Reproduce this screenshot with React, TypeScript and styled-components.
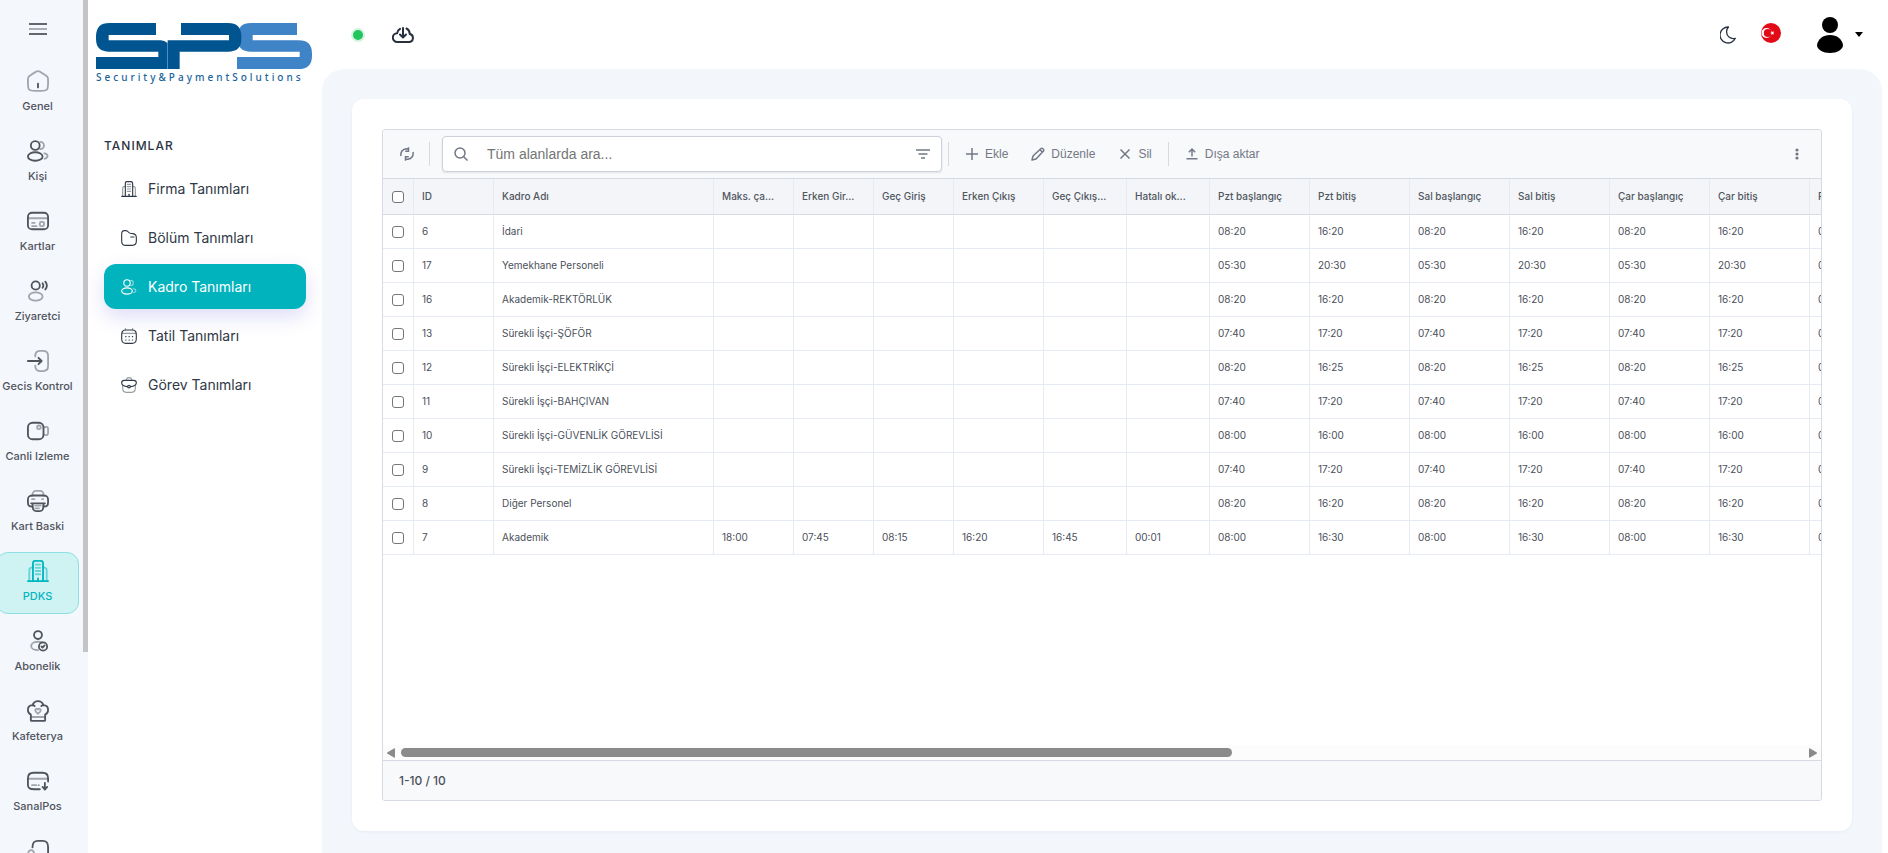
import React from 'react';
import styled, { createGlobalStyle, css } from 'styled-components';

const GlobalStyle = createGlobalStyle`
  *, *::before, *::after { box-sizing: border-box; }
  body {
    margin: 0;
    background: #ffffff;
    color: #2b3442;
    font-family: Inter, "Noto Sans", sans-serif;
    overflow: hidden;
  }
  button { font: inherit; color: inherit; background: none; border: 0; padding: 0; cursor: pointer; }
  a { color: inherit; text-decoration: none; }
  svg { display: block; flex: none; }
`;

/* ---------- icons ---------- */

type IconName =
  | 'home' | 'users' | 'cards' | 'visitor' | 'gate' | 'camera' | 'printer' | 'building'
  | 'member' | 'chef' | 'pos' | 'device' | 'folder' | 'calendar' | 'briefcase';

const faded = 0.5;

const shapes: Record<IconName, React.ReactNode> = {
  home: (
    <>
      <path opacity={faded} d="M1 12.2c0-2.3 0-3.5.5-4.4.5-1 1.500-1.600 3.400-2.800l2-1.300C9.400 2 10.600 1.200 12 1.200s2.600.8 5.100 2.500l2 1.300c1.900 1.200 2.900 1.800 3.400 2.800.5.900.5 2.100.5 4.400v1.600c0 4 0 6-1.400 7.500C20.400 22.800 18.400 22.800 15 22.800H9c-3.400 0-5.400 0-6.600-1.500C1 19.800 1 17.800 1 13.800z" />
      <path d="M12 15v4" />
    </>
  ),
  users: (
    <>
      <circle cx="9" cy="6" r="4.800" />
      <ellipse cx="9" cy="18" rx="8" ry="4.600" />
      <g opacity={faded}>
        <path d="M14.500 2a4 4 0 1 1 0 8" />
        <path d="M19 14.500c2 .4 3.400 1.500 3.400 3s-1.300 2.500-3.200 3" />
      </g>
    </>
  ),
  cards: (
    <>
      <rect x="1" y="3" width="22" height="18" rx="4.500" />
      <g opacity={faded}>
        <path d="M1.500 9h21M5.500 14h3M5.500 17.500h5" />
        <rect x="14" y="13" width="4.500" height="4.500" rx="1.500" />
      </g>
    </>
  ),
  visitor: (
    <>
      <circle cx="9.500" cy="6" r="4.500" />
      <ellipse opacity={faded} cx="9.500" cy="18" rx="7.500" ry="4.500" />
      <path d="M17 3.500c1 1.500 1 3.500 0 5M20 1.800c2 2.500 2 6 0 8.500" />
    </>
  ),
  gate: (
    <>
      <path opacity={faded} d="M9 7c0-4 1-6 5-6h3.500C21.500 1 23 2.500 23 6.500v11c0 4-1.500 5.500-5.500 5.500H14c-4 0-5-2-5-6" />
      <path d="M1 12h15M12.500 8.500 16 12l-3.500 3.500" />
    </>
  ),
  camera: (
    <>
      <rect x="1" y="3" width="17" height="18" rx="5" />
      <circle opacity={faded} cx="13" cy="8" r="2" />
      <path opacity={faded} d="M18 8.500c3.500-2 5-1 5 1.500v4c0 2.500-1.500 3.500-5 1.500" />
    </>
  ),
  printer: (
    <>
      <path d="M6 18c-4 0-5-1-5-5v-2c0-4 1.500-5 5.500-5h11C21.500 6 23 7 23 11v2c0 4-1 5-5 5" />
      <path opacity={faded} d="M6 6c0-3.500.5-5 4-5h4c3.500 0 4 1.500 4 5M5.500 10h2.500M16.500 10h1" />
      <path d="M4.500 14.500h15M6 14.500c0 6 .5 8.500 4 8.500h4c3.500 0 4-2.500 4-8.500" />
      <path opacity={faded} d="M9 17h6M9 20h4" />
    </>
  ),
  building: (
    <>
      <path d="M1 23h22" />
      <path d="M6.500 23V5c0-2.800 0-4 2.500-4h6c2.500 0 2.500 1.200 2.500 4v18" />
      <path opacity={faded} d="M2.500 23V11c0-2 1-3 4-3M21.500 23V11c0-2-1-3-4-3M9.500 5h5M9.500 8.500h5M9.500 12h5M9.500 15.500h5" />
      <path d="M12 23v-3" />
    </>
  ),
  member: (
    <>
      <circle cx="12" cy="5.500" r="4.300" />
      <path opacity={faded} d="M17 13.800c-1.300-.6-3-1-5-1-4.300 0-7.500 2-7.500 4.700S7.700 22 12 22" />
      <circle cx="17.500" cy="18" r="4.500" />
      <path d="m15.800 18 1.200 1.200 2.200-2.400" />
    </>
  ),
  chef: (
    <>
      <path d="M5 22.800h14c.5 0 .8-.3.800-.8v-6c2-1 3.200-3 3.200-5.200 0-3-2-5-5-5.200C17 3 15 1.200 12 1.200S7 3 6 5.600c-3 .2-5 2.200-5 5.200 0 2.200 1.200 4.200 3.200 5.200v6c0 .5.3.8.8.8zM6 5.600c1 .1 1.700.5 2.300 1M18 5.600c-1 .1-1.700.5-2.300 1" />
      <g opacity={faded}>
        <path d="M4.500 18.500h15" />
        <path d="M12 15c-2-1.300-3-2.300-3-3.700 0-2 2-2.300 3-.9 1-1.400 3-1.100 3 .9 0 1.400-1 2.400-3 3.700z" />
      </g>
    </>
  ),
  pos: (
    <>
      <path d="M14 21H8c-5 0-7-1-7-5V9c0-4 2-6 6-6h10c4 0 6 2 6 6v3.500" />
      <path opacity={faded} d="M1.500 9.500h21M5.500 16.500H10M12.500 16.500h.5" />
      <path d="M19.500 14v7M17 18.500l2.500 2.800 2.500-2.800" />
    </>
  ),
  device: (
    <>
      <path d="M6 8c0-5 1.500-7 6-7h5c4.500 0 6 2 6 7v8c0 5-1.500 7-6 7" />
      <path opacity={faded} d="M8 17c0-4-.5-6-3.500-6S1 13 1 17s.5 6 3.500 6S8 21 8 17z" />
    </>
  ),
  folder: (
    <>
      <path d="M1 7c0-4 1-6 4-6h2c2 0 3 .7 4 2 .9 1.200 1.500 1.500 3 1.800l4 .7c4 .7 5 2 5 6V17c0 4-2 6-6 6H7c-4 0-6-2-6-6z" />
      <path d="M14.500 10.500h5" />
    </>
  ),
  calendar: (
    <>
      <path d="M1 12c0-5.500.5-9 6-9h10c5.500 0 6 3.500 6 9v2c0 6-.5 9-6 9H7c-5.500 0-6-3-6-9z" />
      <path opacity={faded} d="M6.500 3V.8M17.500 3V.8M2 8h20" />
      <path strokeDasharray="0.500 4.500" d="M7 13h11M7 18h11" />
    </>
  ),
  briefcase: (
    <>
      <path opacity={faded} d="M8 4c.4-2 1.500-3 4-3s3.600 1 4 3M2.500 13v4c0 4 1.500 6 5.500 6h8c4 0 5.500-2 5.500-6v-4" />
      <path d="M10 14.500C5 14 1 12.500 1 8.500 1 6 2 5 5 5h14c3 0 4 1 4 3.500 0 4-4 5.500-9 6" />
      <circle cx="12" cy="14.300" r="2" />
    </>
  ),
};

function DuoIcon({ name, size, weight = 2 }: { name: IconName; size: number; weight?: number }) {
  return (
    <svg width={size} height={size} viewBox="0 0 24 24" fill="none" stroke="currentColor"
      strokeWidth={weight} strokeLinecap="round" strokeLinejoin="round" aria-hidden="true">
      {shapes[name]}
    </svg>
  );
}

function LineIcon({ size = 14, children }: { size?: number; children: React.ReactNode }) {
  return (
    <svg width={size} height={size} viewBox="0 0 14 14" fill="none" stroke="currentColor" strokeWidth="1.500" aria-hidden="true">
      {children}
    </svg>
  );
}

/* ---------- shell ---------- */

const Shell = styled.div`
  display: flex;
  height: 100vh;
`;

const Rail = styled.nav`
  display: flex;
  justify-content: space-between;
  flex: none;
  width: 88px;
  overflow: hidden;
  background: #f4f7fc;
`;

const RailColumn = styled.div`
  display: flex;
  flex-direction: column;
  align-items: center;
  gap: 8px;
  width: 83px;
  margin-left: -4px;
`;

const RailThumb = styled.div`
  width: 5px;
  height: 76.4%;
  background: #c4c4c8;
`;

const MenuToggle = styled.button`
  display: flex;
  flex: none;
  align-items: center;
  justify-content: center;
  width: 40px;
  height: 54px;
  padding-top: 4px;
  color: #63666d;
`;

const RailLink = styled.a<{ $active?: boolean }>`
  display: flex;
  flex: none;
  flex-direction: column;
  align-items: center;
  gap: 6px;
  width: 100%;
  height: 62px;
  padding-top: 7px;
  border: 1px solid transparent;
  border-radius: 12px;
  color: #50545c;
  font-size: 11px;
  font-weight: 500;
  line-height: 16px;
  white-space: nowrap;
  ${({ $active }) => $active && css`
    color: #00b5bf;
    background: #cff2f3;
    border-color: #8fe0e4;
  `}
`;

const Side = styled.aside`
  display: flex;
  flex-direction: column;
  flex: none;
  width: 234px;
  padding: 23px 16px 0;
`;

const Brand = styled.a`
  display: flex;
  flex-direction: column;
  gap: 2px;
  margin: 0 -8px;
  color: #1a639c;
  font-family: "Noto Sans", sans-serif;
  font-size: 10px;
  font-weight: 500;
  line-height: 12px;
  letter-spacing: 3px;
  white-space: nowrap;
`;

const SideTitle = styled.h2`
  margin: 55px 0 12px;
  color: #2b3442;
  font-size: 12px;
  font-weight: 500;
  line-height: 16px;
  letter-spacing: 1px;
`;

const SideLink = styled.a<{ $active?: boolean }>`
  display: flex;
  align-items: center;
  gap: 11px;
  height: 45px;
  margin-bottom: 4px;
  padding: 0 17px;
  border-radius: 12px;
  color: #2f3846;
  font-size: 14px;
  line-height: 20px;
  ${({ $active }) => $active && css`
    color: #ffffff;
    background: #00b3bd;
    box-shadow: 0 8px 20px rgba(90, 90, 220, 0.2);
  `}
`;

const Page = styled.div`
  display: flex;
  flex: 1;
  flex-direction: column;
  min-width: 0;
  padding-right: 6px;
`;

const TopBar = styled.header`
  display: flex;
  align-items: center;
  flex: none;
  height: 69px;
  padding: 0 19px 0 29px;
  color: #27303f;
`;

const OnlineDot = styled.span`
  width: 14px;
  height: 14px;
  margin-right: 27px;
  border: 2px solid #d5f3df;
  border-radius: 50%;
  background: #22c55e;
`;

const TopActions = styled.div`
  display: flex;
  align-items: center;
  margin-left: auto;
`;

const TopButton = styled.button<{ $gap?: number }>`
  display: flex;
  align-items: center;
  gap: 12px;
  margin-left: ${({ $gap = 0 }) => $gap}px;
`;

const Content = styled.main`
  display: flex;
  flex: 1;
  min-height: 0;
  padding: 30px 30px 22px;
  border-radius: 22px 22px 0 0;
  background: #f3f7fc;
`;

const Card = styled.section`
  display: flex;
  flex: 1;
  min-width: 0;
  padding: 30px;
  border-radius: 12px;
  background: #ffffff;
  box-shadow: 0 1px 3px rgba(40, 60, 110, 0.06);
`;

/* ---------- grid ---------- */

const Grid = styled.div`
  display: flex;
  flex: 1;
  flex-direction: column;
  min-width: 0;
  overflow: hidden;
  border: 1px solid #d5dae3;
  border-radius: 3px;
`;

const Toolbar = styled.div`
  display: flex;
  align-items: center;
  flex: none;
  height: 49px;
  padding: 0 19px 0 17px;
  border-bottom: 1px solid #d5dae3;
  background: #f8f9fb;
  color: #737886;
  font-family: "Liberation Sans", Arial, sans-serif;
  font-size: 12px;
  line-height: 16px;
`;

const Divider = styled.span`
  flex: none;
  width: 1px;
  height: 24px;
  background: #d5dae3;
`;

const ToolButton = styled.button`
  display: flex;
  align-items: center;
  gap: 6px;
  white-space: nowrap;
`;

const RefreshButton = styled(ToolButton)`
  margin-right: 15px;
`;

const ToolGroup = styled.div`
  display: flex;
  gap: 23px;
  padding: 0 16px;
`;

const SearchBox = styled.div`
  display: flex;
  align-items: center;
  width: 500px;
  height: 36px;
  margin: 0 6px 0 12px;
  padding: 0 11px;
  border: 1px solid #cbd0da;
  border-radius: 4px;
  background: #ffffff;
  box-shadow: 0 1px 2px rgba(60, 70, 100, 0.12);
`;

const SearchInput = styled.input`
  flex: 1;
  min-width: 0;
  padding: 0 0 0 19px;
  border: 0;
  outline: 0;
  background: none;
  font-family: "Liberation Sans", Arial, sans-serif;
  font-size: 14px;
  line-height: 20px;
  &::placeholder { color: #757575; opacity: 1; }
`;

const MoreButton = styled(ToolButton)`
  margin-left: auto;
`;

const TableArea = styled.div`
  flex: 1;
  min-height: 0;
  overflow: hidden;
`;

const Table = styled.table`
  width: 1527px;
  border-collapse: separate;
  border-spacing: 0;
  table-layout: fixed;
  color: #4a4f5a;
  font-size: 10px;
  line-height: 16px;
`;

const cell = css`
  padding: 0 7px 2px 8px;
  border-right: 1px solid #e6eaf2;
  text-align: left;
  white-space: nowrap;
  overflow: hidden;
  text-overflow: ellipsis;
`;

const Th = styled.th`
  ${cell}
  height: 36px;
  border-bottom: 1px solid #d5dae3;
  background: #f3f5f8;
  color: #50565f;
  font-size: 10px;
  font-weight: 500;
`;

const Td = styled.td`
  ${cell}
  height: 34px;
  border-bottom: 1px solid #e6eaf2;
`;

const Tick = styled.input`
  display: block;
  width: 12px;
  height: 12px;
  margin: 3px 0 0 1px;
  appearance: none;
  border: 1px solid #767676;
  border-radius: 3px;
  background: #ffffff;
  &:checked { background: #00b3bd; }
`;

const ScrollBar = styled.div`
  display: flex;
  align-items: center;
  flex: none;
  gap: 6px;
  height: 15px;
  padding: 0 4px;
  background: #fcfcfc;
  color: #8a8a8a;
`;

const ScrollTrack = styled.div`
  flex: 1;
  height: 9px;
`;

const ScrollThumb = styled.div`
  width: 59.3%;
  height: 9px;
  border-radius: 5px;
  background: #8a8a8a;
`;

const GridFooter = styled.footer`
  flex: none;
  height: 40px;
  padding: 11px 16px;
  border-top: 1px solid #d5dae3;
  background: #f8f9fb;
  color: #4a505c;
  font-size: 12px;
  font-weight: 500;
  line-height: 18px;
`;

/* ---------- data ---------- */

const railItems: { label: string; icon: IconName; active?: boolean }[] = [
  { label: 'Genel', icon: 'home' },
  { label: 'Kişi', icon: 'users' },
  { label: 'Kartlar', icon: 'cards' },
  { label: 'Ziyaretci', icon: 'visitor' },
  { label: 'Gecis Kontrol', icon: 'gate' },
  { label: 'Canli Izleme', icon: 'camera' },
  { label: 'Kart Baski', icon: 'printer' },
  { label: 'PDKS', icon: 'building', active: true },
  { label: 'Abonelik', icon: 'member' },
  { label: 'Kafeterya', icon: 'chef' },
  { label: 'SanalPos', icon: 'pos' },
  { label: '', icon: 'device' },
];

const sideItems: { label: string; icon: IconName; active?: boolean }[] = [
  { label: 'Firma Tanımları', icon: 'building' },
  { label: 'Bölüm Tanımları', icon: 'folder' },
  { label: 'Kadro Tanımları', icon: 'users', active: true },
  { label: 'Tatil Tanımları', icon: 'calendar' },
  { label: 'Görev Tanımları', icon: 'briefcase' },
];

const columns: [string, number][] = [
  ['ID', 80], ['Kadro Adı', 220], ['Maks. ça...', 80], ['Erken Gir...', 80], ['Geç Giriş', 80],
  ['Erken Çıkış', 90], ['Geç Çıkış...', 83], ['Hatalı ok...', 83],
  ['Pzt başlangıç', 100], ['Pzt bitiş', 100], ['Sal başlangıç', 100], ['Sal bitiş', 100],
  ['Çar başlangıç', 100], ['Çar bitiş', 100], ['Per başlangıç', 100],
];

type Row = { id: number; name: string; start: string; end: string; limits?: string[] };

const noLimits = ['', '', '', '', '', ''];

const rows: Row[] = [
  { id: 6, name: 'İdari', start: '08:20', end: '16:20' },
  { id: 17, name: 'Yemekhane Personeli', start: '05:30', end: '20:30' },
  { id: 16, name: 'Akademik-REKTÖRLÜK', start: '08:20', end: '16:20' },
  { id: 13, name: 'Sürekli İşçi-ŞÖFÖR', start: '07:40', end: '17:20' },
  { id: 12, name: 'Sürekli İşçi-ELEKTRİKÇİ', start: '08:20', end: '16:25' },
  { id: 11, name: 'Sürekli İşçi-BAHÇIVAN', start: '07:40', end: '17:20' },
  { id: 10, name: 'Sürekli İşçi-GÜVENLİK GÖREVLİSİ', start: '08:00', end: '16:00' },
  { id: 9, name: 'Sürekli İşçi-TEMİZLİK GÖREVLİSİ', start: '07:40', end: '17:20' },
  { id: 8, name: 'Diğer Personel', start: '08:20', end: '16:20' },
  { id: 7, name: 'Akademik', start: '08:00', end: '16:30', limits: ['18:00', '07:45', '08:15', '16:20', '16:45', '00:01'] },
];

function Logo() {
  return (
    <svg width="216" height="46" viewBox="0 0 648 138" aria-hidden="true">
      <path fill="#3f84c6" d="M603 0H465Q425 0 425 40V48Q425 86 465 86H611V102H423V138H608Q648 138 648 98V92Q648 52 608 52H470V36H603Z" />
      <path fill="#005591" d="M180 0H40Q0 0 0 40V48Q0 86 40 86H187V102H0V138H214V60Q206 52 194 52H38V36H180Z" />
      <path fill="#005591" d="M255 0H396Q436 0 436 40V48Q436 86 396 86H251V138H215V52H399V36H255Z" />
      <path stroke="#3f84c6" strokeWidth="2" d="M214.500 58V138" />
    </svg>
  );
}

export default function App() {
  return (
    <Shell>
      <GlobalStyle />
      <Rail aria-label="Modüller">
        <RailColumn>
          <MenuToggle aria-label="Menü">
            <svg width="18" height="14" viewBox="0 0 18 14" stroke="currentColor" strokeWidth="2">
              <path d="M0 2h18M0 12h18" />
              <path d="M0 7h18" opacity="0.5" />
            </svg>
          </MenuToggle>
          {railItems.map((item) => (
            <RailLink key={item.icon} href="#" $active={item.active}>
              <DuoIcon name={item.icon} size={22} />
              {item.label}
            </RailLink>
          ))}
        </RailColumn>
        <RailThumb />
      </Rail>

      <Side>
        <Brand href="#">
          <Logo />
          Security&amp;PaymentSolutions
        </Brand>
        <SideTitle>TANIMLAR</SideTitle>
        {sideItems.map((item) => (
          <SideLink key={item.label} href="#" $active={item.active}>
            <DuoIcon name={item.icon} size={16} weight={1.7} />
            {item.label}
          </SideLink>
        ))}
      </Side>

      <Page>
        <TopBar>
          <OnlineDot />
          <TopButton aria-label="İndir">
            <svg width="22" height="16" viewBox="0 0 22 16" fill="none" stroke="currentColor" strokeWidth="2" strokeLinecap="round" strokeLinejoin="round">
              <path d="M8 1.800A5.500 5.500 0 0 0 5.200 6.200 4.300 4.300 0 0 0 5.300 15H17a4 4 0 0 0 .8-7.900C17.700 4.500 16.600 2.400 14.500 1.500" />
              <path d="M11 1v9M8 7.500l3 3 3-3" />
            </svg>
          </TopButton>
          <TopActions>
            <TopButton aria-label="Koyu tema">
              <svg width="16" height="18" viewBox="0 0 16 18" fill="none" stroke="currentColor" strokeWidth="1.300" strokeLinejoin="round">
                <path d="M8.500 1A8 8 0 1 0 15.300 12.300C10.500 13.500 6.300 10 6.600 5.500 6.700 3.700 7.400 2.100 8.500 1z" />
              </svg>
            </TopButton>
            <TopButton aria-label="Türkçe" $gap={25}>
              <svg width="20" height="24" viewBox="0 0 20 24">
                <circle cx="10" cy="10" r="10" fill="#e30a17" />
                <circle cx="5.500" cy="10" r="5" fill="#fff" />
                <circle cx="6.800" cy="10" r="4" fill="#e30a17" />
                <path fill="#fff" d="m9 10 1.500-.6.100-1.600 1 1.200 1.600-.4-.9 1.400.9 1.400-1.600-.4-1 1.200-.1-1.600z" />
              </svg>
            </TopButton>
            <TopButton aria-label="Hesap" $gap={36}>
              <svg width="26" height="36" viewBox="0 0 26 36">
                <circle cx="13" cy="8" r="8" />
                <path d="M0 28c1-6 6-10 13-10s12 4 13 10c0 4.500-6 8-13 8S0 32.500 0 28z" />
              </svg>
              <svg width="8" height="5" viewBox="0 0 8 5"><path d="M0 0h8L4 5z" /></svg>
            </TopButton>
          </TopActions>
        </TopBar>

        <Content>
          <Card>
            <Grid>
              <Toolbar>
                <RefreshButton aria-label="Yenile">
                  <LineIcon>
                    <path d="M1 9C.2 5 2.700 2.200 6 1.700L8.500 2M8.500.3v4H5.200M13 5c.8 4-1.700 6.800-5 7.300L5.500 12M5.500 13.700v-4h3.300" />
                  </LineIcon>
                </RefreshButton>
                <Divider />
                <SearchBox>
                  <LineIcon>
                    <circle cx="6" cy="6" r="5" />
                    <path d="m9.500 9.500 4 4" />
                  </LineIcon>
                  <SearchInput type="text" aria-label="Tüm alanlarda ara" placeholder="Tüm alanlarda ara..." />
                  <ToolButton aria-label="Filtre">
                    <LineIcon><path d="M0 3h14M2.500 7h9M5 11h4" /></LineIcon>
                  </ToolButton>
                </SearchBox>
                <Divider />
                <ToolGroup>
                  <ToolButton>
                    <LineIcon><path d="M7 1v12M1 7h12" /></LineIcon>
                    Ekle
                  </ToolButton>
                  <ToolButton>
                    <LineIcon>
                      <path strokeLinejoin="round" d="m1 13 1-4L10 1.500c1-1 3.500 1 2.500 2.500L5 12zM9 2.800 11.300 5" />
                    </LineIcon>
                    Düzenle
                  </ToolButton>
                  <ToolButton>
                    <LineIcon><path d="m2.500 2.500 9 9M11.500 2.500l-9 9" /></LineIcon>
                    Sil
                  </ToolButton>
                </ToolGroup>
                <Divider />
                <ToolGroup>
                  <ToolButton>
                    <LineIcon><path d="M1.500 11.800h11M7 9.500V2.500M3.800 5.200 7 2l3.200 3.200" /></LineIcon>
                    Dışa aktar
                  </ToolButton>
                </ToolGroup>
                <MoreButton aria-label="Diğer">
                  <svg width="10" height="12" viewBox="0 0 10 12" fill="currentColor">
                    <circle cx="5" cy="2" r="1.600" />
                    <circle cx="5" cy="6" r="1.600" />
                    <circle cx="5" cy="10" r="1.600" />
                  </svg>
                </MoreButton>
              </Toolbar>

              <TableArea>
                <Table>
                  <colgroup>
                    <col width={31} />
                    {columns.map(([label, width]) => <col key={label} width={width} />)}
                  </colgroup>
                  <thead>
                    <tr>
                      <Th><Tick type="checkbox" aria-label="Tümünü seç" /></Th>
                      {columns.map(([label]) => <Th key={label}>{label}</Th>)}
                    </tr>
                  </thead>
                  <tbody>
                    {rows.map((row) => (
                      <tr key={row.id}>
                        <Td><Tick type="checkbox" aria-label={row.name} /></Td>
                        <Td>{row.id}</Td>
                        <Td>{row.name}</Td>
                        {(row.limits ?? noLimits).map((value, i) => <Td key={i}>{value}</Td>)}
                        {columns.slice(8).map(([label], i) => (
                          <Td key={label}>{i % 2 ? row.end : row.start}</Td>
                        ))}
                      </tr>
                    ))}
                  </tbody>
                </Table>
              </TableArea>

              <ScrollBar>
                <svg width="8" height="10" viewBox="0 0 8 10" fill="currentColor"><path d="M8 1v8q0 1-1 .5L.5 5.800q-1-.8 0-1.600L7 .5q1-.5 1 .5z" /></svg>
                <ScrollTrack><ScrollThumb /></ScrollTrack>
                <svg width="8" height="10" viewBox="0 0 8 10" fill="currentColor"><path d="M0 1v8q0 1 1 .5l6.500-3.700q1-.8 0-1.600L1 .5Q0 0 0 1z" /></svg>
              </ScrollBar>
              <GridFooter>1-10 / 10</GridFooter>
            </Grid>
          </Card>
        </Content>
      </Page>
    </Shell>
  );
}
